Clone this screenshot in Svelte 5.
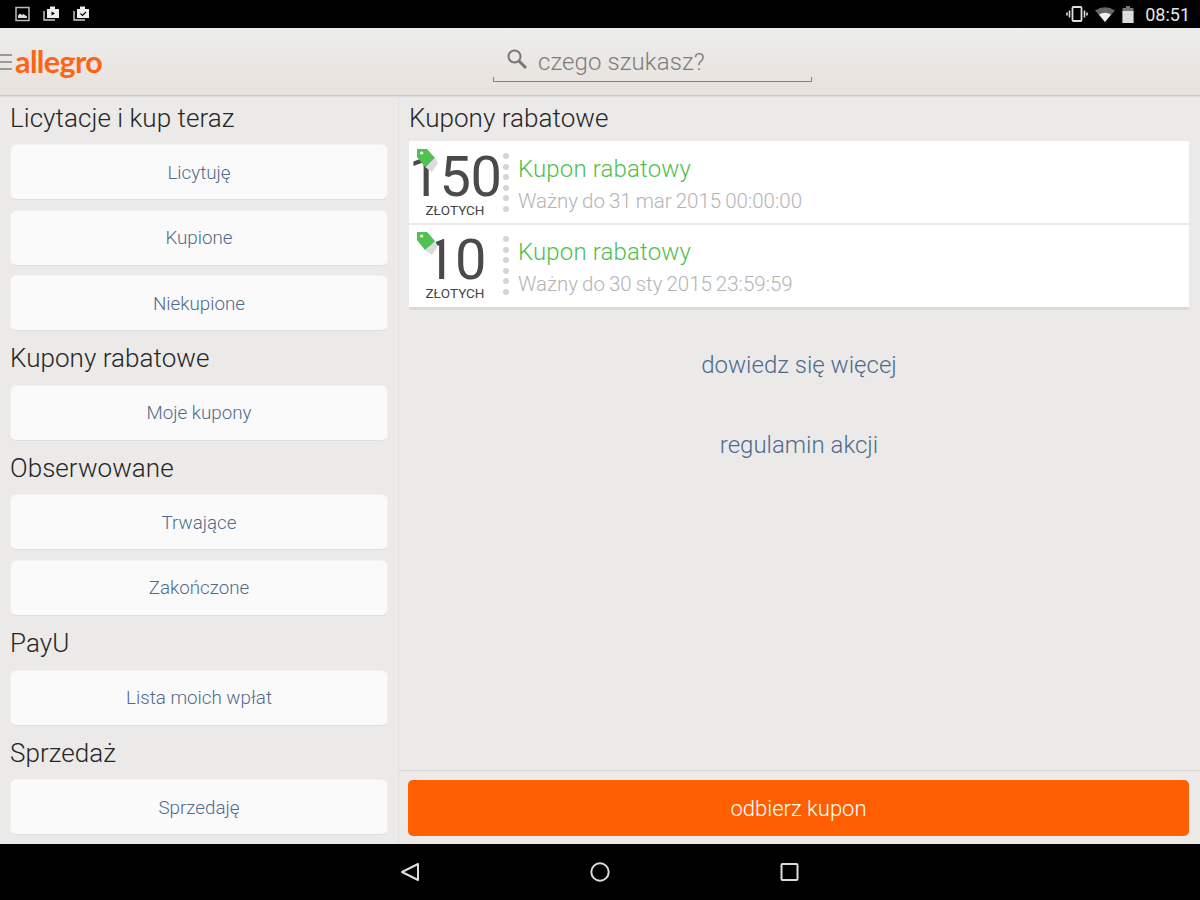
<script lang="ts">
  const sections = [
    { title: 'Licytacje i kup teraz', items: ['Licytuję', 'Kupione', 'Niekupione'] },
    { title: 'Kupony rabatowe', items: ['Moje kupony'] },
    { title: 'Obserwowane', items: ['Trwające', 'Zakończone'] },
    { title: 'PayU', items: ['Lista moich wpłat'] },
    { title: 'Sprzedaż', items: ['Sprzedaję'] }
  ];

  const coupons = [
    { amount: '150', date: '31 mar 2015 00:00:00' },
    { amount: '10', date: '30 sty 2015 23:59:59' }
  ];
</script>

<div class="screen">
  <div class="status">
    <div class="status-left">
      <svg width="16" height="16" viewBox="0 0 16 16">
        <rect x="1" y="1.5" width="13" height="13" fill="none" stroke="#bbb" stroke-width="1.5" />
        <path d="M3 12V9.5l2-2 2 1.5 1.5-1 3.5 2.5V12z" fill="#ddd" />
      </svg>
      <svg width="18" height="18" viewBox="0 0 18 18">
        <path d="M1 6v9h11" fill="none" stroke="#ccc" stroke-width="1.4" />
        <path d="M4 4h3V1.5h5V4h4v9H4z" fill="#eee" />
        <path d="M8.5 6.5v4l3.5-2z" fill="#000" />
      </svg>
      <svg width="18" height="18" viewBox="0 0 18 18">
        <path d="M1 6v9h11" fill="none" stroke="#ccc" stroke-width="1.4" />
        <path d="M4 4h3V1.5h5V4h4v9H4z" fill="#eee" />
        <path d="M7.5 8.5l2 2 3.5-3.5" fill="none" stroke="#000" stroke-width="1.2" />
      </svg>
    </div>
    <div class="status-right">
      <svg width="22" height="16" viewBox="0 0 22 16">
        <rect x="6.5" y="1" width="9" height="14" rx="1" fill="none" stroke="#ddd" stroke-width="1.8" />
        <path d="M3.5 4.5v7M1 6.5v3M18.5 4.5v7M21 6.5v3" stroke="#ddd" stroke-width="1.6" />
      </svg>
      <svg width="20" height="16" viewBox="0 0 20 16">
        <path d="M0 4.5Q10 -2 20 4.5L10 16z" fill="#666" />
        <path d="M4 8.5Q10 5 16 8.5L10 16z" fill="#eee" />
      </svg>
      <svg width="12" height="17" viewBox="0 0 12 17">
        <path d="M4 0h4v2h3.500v15H.5V2h3.500z" fill="#777" />
        <path d="M.5 5h11v12H.5z" fill="#ddd" />
      </svg>
      <span class="clock">08:51</span>
    </div>
  </div>

  <header class="topbar">
    <div class="brand">
      <div class="burger"><i></i><i></i><i></i></div>
      <span class="logo">allegro</span>
    </div>
    <div class="search">
      <svg width="22" height="22" viewBox="0 0 22 22">
        <circle cx="8.500" cy="8.500" r="6" fill="none" stroke="#777" stroke-width="2" />
        <path d="M13 13l7 7" stroke="#777" stroke-width="3" />
      </svg>
      <span>czego szukasz?</span>
    </div>
  </header>

  <div class="body">
    <aside class="side">
      {#each sections as s}
        <h2>{s.title}</h2>
        {#each s.items as item}
          <button class="link-btn">{item}</button>
        {/each}
      {/each}
    </aside>

    <main class="main">
      <div class="main-scroll">
        <h2>Kupony rabatowe</h2>
        <div class="coupons">
          {#each coupons as c}
            <div class="coupon">
              <div class="value">
                <svg class="tag" width="26" height="30" viewBox="0 0 26 30">
                  <path d="M19 10l3 5-6 9-7-5z" fill="#dcdcdc" />
                  <path d="M1 1H11L19 10 9 19 1 9z" fill="#4fc24f" />
                  <circle cx="5.700" cy="5" r="1.600" fill="#fff" />
                </svg>
                <span class="amount">{c.amount}</span>
                <span class="currency">ZŁOTYCH</span>
              </div>
              <div class="dots"><i></i><i></i><i></i><i></i><i></i><i></i></div>
              <div class="info">
                <div class="name">Kupon rabatowy</div>
                <div class="valid"><span>Ważny do</span> {c.date}</div>
              </div>
            </div>
          {/each}
        </div>
        <a class="more first" href="#more">dowiedz się więcej</a>
        <a class="more" href="#rules">regulamin akcji</a>
      </div>
      <div class="footer">
        <button class="cta">odbierz kupon</button>
      </div>
    </main>
  </div>

  <nav class="nav">
    <svg width="20" height="20" viewBox="0 0 20 20">
      <path d="M18 2v16L2 10z" fill="none" stroke="#ddd" stroke-width="2" stroke-linejoin="round" />
    </svg>
    <svg width="20" height="20" viewBox="0 0 20 20">
      <circle cx="10" cy="10" r="8.700" fill="none" stroke="#ddd" stroke-width="2" />
    </svg>
    <svg width="20" height="20" viewBox="0 0 20 20">
      <rect x="1.500" y="2" width="16" height="16" rx="1" fill="none" stroke="#ddd" stroke-width="2" />
    </svg>
  </nav>
</div>

<style>
  :global(body) {
    margin: 0;
  }

  .screen {
    width: 1200px;
    height: 900px;
    display: flex;
    flex-direction: column;
    overflow: hidden;
    background: #ebeae8;
    font-family: Roboto, "Liberation Sans", sans-serif;
    font-weight: 300;
  }

  .status {
    height: 28px;
    flex: none;
    background: #000;
    display: flex;
    justify-content: space-between;
    align-items: center;
    padding: 0 10px 0 15px;
  }
  .status-left {
    display: flex;
    align-items: center;
    gap: 12px;
  }
  .status-right {
    display: flex;
    align-items: center;
    gap: 7px;
  }
  .clock {
    color: #e4e4e4;
    font-size: 18px;
    font-weight: 400;
    margin-left: 4px;
  }

  .topbar {
    height: 68px;
    flex: none;
    box-sizing: border-box;
    background: linear-gradient(#ecedec, #e8e1dc);
    border-bottom: 1px solid #c9c7c4;
    box-shadow: 0 1px 1px rgba(0, 0, 0, 0.06);
    display: flex;
    align-items: center;
  }
  .brand {
    width: 493px;
    flex: none;
    display: flex;
    align-items: center;
    gap: 3px;
  }
  .burger {
    width: 12px;
    display: flex;
    flex-direction: column;
    gap: 5px;
    margin-top: 1px;
  }
  .burger i {
    height: 2px;
    background: #999;
  }
  .logo {
    color: #ff6414;
    font-family: Lato, Roboto, sans-serif;
    font-size: 30.5px;
    font-weight: 700;
    letter-spacing: -0.6px;
    line-height: 38px;
    margin-top: -2px;
  }
  .search {
    align-self: flex-start;
    width: 319px;
    height: 40px;
    margin-top: 14px;
    box-sizing: border-box;
    position: relative;
    padding: 0 0 0 13px;
    display: flex;
    align-items: center;
    gap: 10px;
    color: #7d7d7b;
    font-size: 24px;
    letter-spacing: 0.1px;
    border-bottom: 1px solid #f25a28;
  }
  .search svg {
    margin-top: -5px;
  }
  .search::before,
  .search::after {
    content: '';
    position: absolute;
    bottom: 0;
    width: 1px;
    height: 4px;
    background: #f25a28;
  }
  .search::before {
    left: 0;
  }
  .search::after {
    right: 0;
  }

  .body {
    flex: 1;
    min-height: 0;
    display: flex;
  }

  .side {
    width: 399px;
    flex: none;
    box-sizing: border-box;
    padding: 0 10px;
    border-right: 1px solid #e2e1df;
    overflow: hidden;
  }
  h2 {
    margin: 0;
    font-size: 26px;
    font-weight: 300;
    letter-spacing: 0.05px;
    color: #262626;
    height: 53.6px;
    line-height: 55px;
  }
  .side h2:first-child {
    height: 48px;
    line-height: 45px;
  }
  .link-btn {
    display: block;
    width: 100%;
    height: 56px;
    margin: 0 0 9.6px;
    padding: 1px 0 0;
    box-sizing: border-box;
    background: #fafafa;
    border: 1px solid #f1f1f0;
    border-bottom-color: #e0dfdd;
    border-radius: 6px;
    color: #4f6a8c;
    font-family: inherit;
    font-size: 18.8px;
    font-weight: 300;
  }
  .link-btn:has(+ h2) {
    margin-bottom: 0;
  }

  .main {
    flex: 1;
    min-width: 0;
    display: flex;
    flex-direction: column;
  }
  .main-scroll {
    flex: 1;
    min-height: 0;
    padding: 0 11px 0 10px;
    display: flex;
    flex-direction: column;
  }
  .main-scroll h2 {
    height: 45px;
    line-height: 45px;
  }
  .coupons {
    background: #fff;
    border-bottom: 3px solid #d9d9d7;
    border-radius: 2px;
  }
  .coupon {
    height: 82px;
    box-sizing: border-box;
    display: flex;
    align-items: stretch;
  }
  .coupon + .coupon {
    border-top: 2px solid #ebeae8;
    height: 84px;
  }
  .value {
    width: 92px;
    flex: none;
    position: relative;
    display: flex;
    flex-direction: column;
    align-items: center;
  }
  .amount {
    font-size: 56px;
    font-weight: 400;
    color: #4a4a4a;
    line-height: 44px;
    margin-top: 14px;
    letter-spacing: -0.6px;
  }
  .coupon + .coupon .amount {
    margin-top: 13px;
  }
  .currency {
    font-size: 13.5px;
    font-weight: 400;
    color: #444;
    line-height: 16px;
    margin-top: 3px;
  }
  .tag {
    position: absolute;
    left: 7px;
    top: 7px;
  }
  .coupon + .coupon .tag {
    top: 6px;
  }
  .dots {
    width: 6px;
    flex: none;
    margin: 12px 0 0 2px;
    display: flex;
    flex-direction: column;
    gap: 4.5px;
  }
  .coupon + .coupon .dots {
    margin-top: 11px;
  }
  .dots i {
    width: 6px;
    height: 6px;
    border-radius: 50%;
    background: #d4d4d4;
  }
  .info {
    margin-left: 9px;
    padding-top: 12px;
  }
  .coupon + .coupon .info {
    padding-top: 11px;
  }
  .name {
    color: #4ebf4e;
    font-size: 24px;
    letter-spacing: 0.15px;
    line-height: 32px;
  }
  .valid {
    color: #b4b4b4;
    font-size: 20.5px;
    line-height: 32px;
    word-spacing: -1px;
  }
  .more {
    align-self: center;
    color: #4f6a8c;
    font-size: 24px;
    line-height: 32px;
    text-decoration: none;
    margin-top: 48px;
  }
  .more.first {
    margin-top: 39px;
  }
  .footer {
    height: 74px;
    flex: none;
    box-sizing: border-box;
    border-top: 1px solid #d8d7d5;
    padding: 9px 11px 8px 9px;
  }
  .cta {
    display: block;
    width: 100%;
    height: 56px;
    padding: 0;
    border: 0;
    border-radius: 5px;
    background: #ff5f00;
    color: #fff;
    font-family: inherit;
    font-size: 22px;
    font-weight: 300;
  }

  .nav {
    height: 56px;
    flex: none;
    background: #000;
    display: flex;
    align-items: center;
    justify-content: center;
    gap: 170px;
  }
</style>
